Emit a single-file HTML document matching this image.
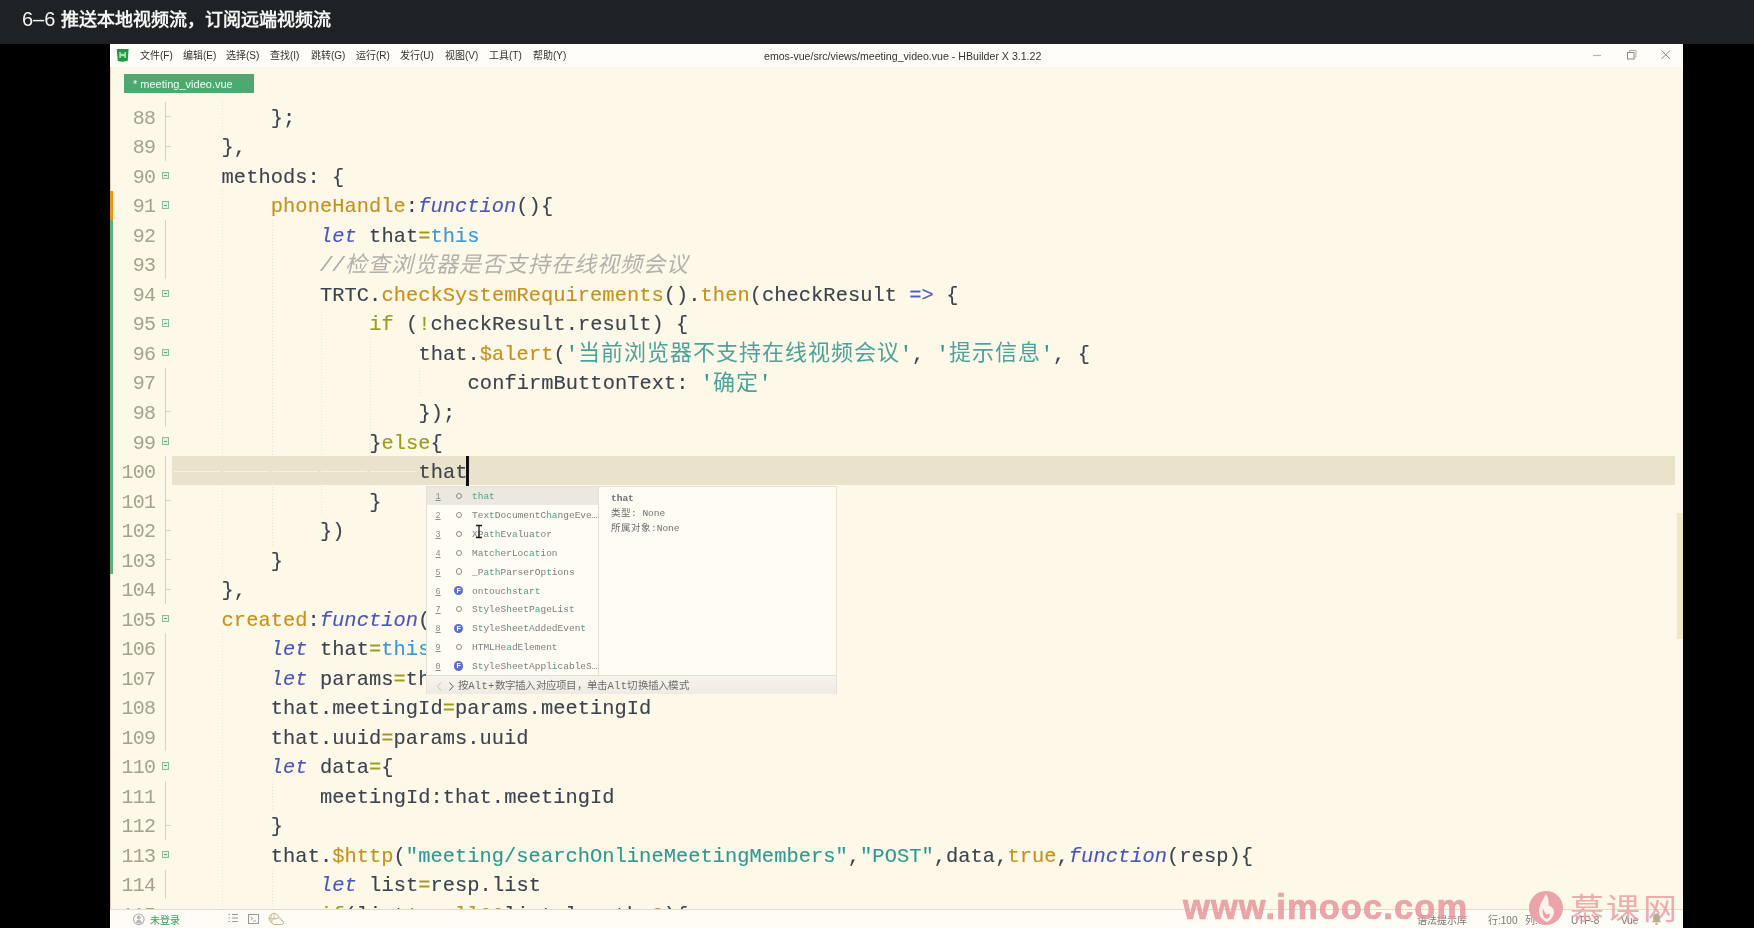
<!DOCTYPE html>
<html lang="zh-CN"><head><meta charset="utf-8">
<style>
*{margin:0;padding:0;box-sizing:border-box}
html,body{width:1754px;height:928px;overflow:hidden;background:#000;position:relative;font-family:"Liberation Sans",sans-serif;-webkit-font-smoothing:antialiased}
#hdr{position:absolute;left:0;top:0;width:1754px;height:44px;background:#1f2224;color:#f4f4f4;font-size:18px;line-height:38px;padding-left:22px;white-space:pre}
#hdr b{font-weight:600}
#win{position:absolute;left:110px;top:44px;width:1573px;height:884px;background:#fef8e8;overflow:hidden}
#menu{position:absolute;left:0;top:0;width:1573px;height:23px;background:#fffdf8}
.mi{position:absolute;top:5px;font-size:10px;color:#333;white-space:pre;line-height:14px}
#wtitle{position:absolute;top:4.5px;left:654px;font-size:10.6px;color:#333;white-space:pre;line-height:14px}
#tab{position:absolute;left:14px;top:30px;width:130px;height:19px;background:#4ea971;color:#f4fbf6;font-size:11px;line-height:21px;padding-left:9px;white-space:pre}
#code{position:absolute;left:-110px;top:-44px;width:1754px;height:953px;clip-path:inset(0 0 19px 0)}
.ln{position:absolute;height:29.55px;line-height:29.55px;font-family:"Liberation Mono",monospace;font-size:20.4px;letter-spacing:0.04px;white-space:pre;color:#3a4550;-webkit-text-stroke:0.12px currentColor}
.num{position:absolute;left:100px;width:55.2px;text-align:right;height:29.55px;line-height:29.55px;font-family:"Liberation Mono",monospace;font-size:20px;letter-spacing:-0.75px;color:#a89f8c}
.d{color:#3a4550}.g{color:#c8901c}.o{color:#9c9c1c}.bi{color:#4757bf;font-style:italic}.b{color:#4b5dc8}.t{color:#3a9ad9}.s{color:#2f9a91}.ci{color:#a9a8a4;font-style:italic}.p{color:#e05c78}
.cj{letter-spacing:0.98px;font-size:22px;-webkit-text-stroke:0;position:relative;top:0.5px}
.cjc{top:1px;color:#b2b0ab}
.s .cj{color:#4aa39d}
.fb{position:absolute;left:161.5px;width:7.5px;height:7.5px;border:1.1px solid #8cbb9c;background:#e3f3e4}
.fb::after{content:"";position:absolute;left:1px;right:1px;top:2.3px;height:1px;background:#6e9c80}
.gl{position:absolute;left:165px;width:1px;background:#d9d0bd}
.gt{position:absolute;left:165px;width:6px;height:1px;background:#d9d0bd}
.ig{position:absolute;width:1px;background-image:linear-gradient(#ebe4d3 50%,transparent 50%);background-size:1px 3px}
#hl{position:absolute;left:172px;top:455.6px;width:1503px;height:29.7px;background:#eae2cb}
#status{position:absolute;left:0;top:865px;width:1573px;height:19px;background:#fffcf6;border-top:1.3px solid #e4dbc9}

#logoH{position:absolute;left:6.5px;top:4.5px;width:11.5px;height:13.5px;background:#1aa34a;border-radius:1px 1px 5px 5px;color:#fff;font-weight:bold;font-size:10px;line-height:12px;text-align:center}
.wc{position:absolute;top:0;height:23px}
#edgeO{position:absolute;left:0;width:3px;background:#ea9317}
#edgeG{position:absolute;left:0;width:3px;background:#62ad7c}
#edgeL{position:absolute;left:0;width:1px;background:#d8cfb8}
#caret{position:absolute;left:466.3px;top:456.3px;width:2.3px;height:29.3px;background:#111}
.ws{position:absolute;top:471px;height:1px;background:#f6f1e3}
#sb{position:absolute;left:1676.5px;top:513px;width:6.5px;height:126px;background:#f3e6c6}
#pop{position:absolute;left:426px;top:486px;width:411px;height:208px;background:#fffcf4;border:1px solid #e6e1d6;font-family:"Liberation Mono",monospace}
#pop .sel{position:absolute;left:0;top:0;width:172px;height:18.2px;background:#ebe8e0}
#pop .div{position:absolute;left:171px;top:0;width:1px;height:189px;background:#e3dfd4}
#pop .row{position:absolute;left:0;width:172px;height:18.85px;line-height:18.85px;font-size:9.5px;white-space:pre;color:#7d7d7d}
#pop .row .n{position:absolute;left:8.5px;font-size:8.5px;text-decoration:underline;color:#8a8a8a}
#pop .row .ic{position:absolute;left:28.5px;top:4.7px;width:6.3px;height:6.3px;border:1.3px solid #8c8c8c;border-radius:50%}
#pop .row .icf{position:absolute;left:27px;top:3.4px;width:9.4px;height:9.4px;border-radius:50%;background:#5b6cd3;color:#fff;font-family:"Liberation Sans",sans-serif;font-weight:bold;font-size:7px;line-height:9.4px;text-align:center}
#pop .row .tx{position:absolute;left:45px}
#pop .m{color:#4aa588}
#pop .det{position:absolute;left:184px;font-size:9.5px;color:#6e6e6e;white-space:pre;line-height:14.9px;top:5px}
#pop .foot{position:absolute;left:0;top:188px;width:409px;height:19px;background:linear-gradient(#f6f4ee,#eeebe4);border-top:1px solid #e0dcd2;font-size:10.5px;letter-spacing:0.27px;color:#6c6c6c;white-space:pre;line-height:21px}
#wm{position:absolute;left:1183px;top:886.5px;font-family:"Liberation Sans",sans-serif;font-weight:bold;font-size:34.5px;letter-spacing:1.1px;color:rgba(232,150,158,0.85);-webkit-text-stroke:0.7px rgba(232,150,158,0.85);white-space:pre;line-height:40px}
#wm2{position:absolute;left:1570px;top:888.5px;font-size:34px;letter-spacing:2.3px;transform:scaleY(0.87);transform-origin:0 50%;color:rgba(232,150,158,0.78);white-space:pre;line-height:40px;font-weight:300}
#wmc{position:absolute;left:1528.5px;top:890.5px;width:34.5px;height:34.5px;border-radius:50%;background:#eaa3a8}
.st{position:absolute;top:910.5px;font-size:10px;line-height:19px;color:#777;white-space:pre}
</style></head><body>
<div id="root" style="position:absolute;left:0;top:0;width:1754px;height:928px;will-change:transform">
<div id="hdr"><span style="font-size:20px">6–6 </span><b>推送本地视频流，订阅远端视频流</b></div>
<div id="win">
 <div id="menu">
  <svg style="position:absolute;left:0;top:0" width="26" height="23" viewBox="0 0 26 23"><path d="M6.7 4.9H18.6L17.7 17.1L12.6 17.8L7.8 17.1Z" fill="#1c9a47"/><path d="M9.2 8h1.7v6H9.2zM14.4 8h1.6v6h-1.6zM10.9 9.8h3.5v2.4h-3.5z" fill="#a3e3ac"/></svg>
  <div class="mi" style="left:30px">文件(F)</div>
  <div class="mi" style="left:73px">编辑(E)</div>
  <div class="mi" style="left:116px">选择(S)</div>
  <div class="mi" style="left:160px">查找(I)</div>
  <div class="mi" style="left:201px">跳转(G)</div>
  <div class="mi" style="left:246px">运行(R)</div>
  <div class="mi" style="left:290px">发行(U)</div>
  <div class="mi" style="left:335px">视图(V)</div>
  <div class="mi" style="left:379px">工具(T)</div>
  <div class="mi" style="left:423px">帮助(Y)</div>
  <div id="wtitle">emos-vue/src/views/meeting_video.vue - HBuilder X 3.1.22</div>
  <svg style="position:absolute;left:1480px;top:0" width="93" height="23" viewBox="0 0 93 23">
   <line x1="3" y1="11.5" x2="11" y2="11.5" stroke="#b9b4ab" stroke-width="1.2"/>
   <rect x="37.5" y="8.5" width="6.5" height="6.5" fill="none" stroke="#8c8780" stroke-width="1"/>
   <path d="M39.5 8.5 V6.5 H46 V13 H44" fill="none" stroke="#b8aaa0" stroke-width="1"/>
   <path d="M71.5 6.5 L80 15 M80 6.5 L71.5 15" stroke="#8c8780" stroke-width="1"/>
  </svg>
 </div>
 <div id="tab">* meeting_video.vue</div>
 <div id="code">
 <div id="hl"></div>
<div class="ln" style="top:103.80px;left:270.80px"><span class="d">};</span></div>
<div class="num" style="top:103.80px">88</div>
<div class="ln" style="top:133.32px;left:221.60px"><span class="d">},</span></div>
<div class="num" style="top:133.32px">89</div>
<div class="ln" style="top:162.84px;left:221.60px"><span class="d">methods: {</span></div>
<div class="num" style="top:162.84px">90</div>
<div class="ln" style="top:192.36px;left:270.80px"><span class="g">phoneHandle</span><span class="d">:</span><span class="bi">function</span><span class="d">(){</span></div>
<div class="num" style="top:192.36px">91</div>
<div class="ln" style="top:221.88px;left:320.00px"><span class="bi">let</span><span class="d"> that</span><span class="o">=</span><span class="t">this</span></div>
<div class="num" style="top:221.88px">92</div>
<div class="ln" style="top:251.40px;left:320.00px"><span class="ci">//<span class="cj cjc">检查浏览器是否支持在线视频会议</span></span></div>
<div class="num" style="top:251.40px">93</div>
<div class="ln" style="top:280.92px;left:320.00px"><span class="d">TRTC.</span><span class="g">checkSystemRequirements</span><span class="d">().</span><span class="g">then</span><span class="d">(checkResult </span><span class="b">=&gt;</span><span class="d"> {</span></div>
<div class="num" style="top:280.92px">94</div>
<div class="ln" style="top:310.44px;left:369.20px"><span class="o">if</span><span class="d"> (</span><span class="o">!</span><span class="d">checkResult.result) {</span></div>
<div class="num" style="top:310.44px">95</div>
<div class="ln" style="top:339.96px;left:418.40px"><span class="d">that.</span><span class="g">$alert</span><span class="d">(</span><span class="s">&#x27;<span class="cj">当前浏览器不支持在线视频会议</span>&#x27;</span><span class="d">, </span><span class="s">&#x27;<span class="cj">提示信息</span>&#x27;</span><span class="d">, {</span></div>
<div class="num" style="top:339.96px">96</div>
<div class="ln" style="top:369.48px;left:467.60px"><span class="d">confirmButtonText: </span><span class="s">&#x27;<span class="cj">确定</span>&#x27;</span></div>
<div class="num" style="top:369.48px">97</div>
<div class="ln" style="top:399.00px;left:418.40px"><span class="d">});</span></div>
<div class="num" style="top:399.00px">98</div>
<div class="ln" style="top:428.52px;left:369.20px"><span class="d">}</span><span class="o">else</span><span class="d">{</span></div>
<div class="num" style="top:428.52px">99</div>
<div class="ln" style="top:458.04px;left:418.40px"><span class="d">that</span></div>
<div class="num" style="top:458.04px">100</div>
<div class="ln" style="top:487.56px;left:369.20px"><span class="d">}</span></div>
<div class="num" style="top:487.56px">101</div>
<div class="ln" style="top:517.08px;left:320.00px"><span class="d">})</span></div>
<div class="num" style="top:517.08px">102</div>
<div class="ln" style="top:546.60px;left:270.80px"><span class="d">}</span></div>
<div class="num" style="top:546.60px">103</div>
<div class="ln" style="top:576.12px;left:221.60px"><span class="d">},</span></div>
<div class="num" style="top:576.12px">104</div>
<div class="ln" style="top:605.64px;left:221.60px"><span class="g">created</span><span class="d">:</span><span class="bi">function</span><span class="d">(){</span></div>
<div class="num" style="top:605.64px">105</div>
<div class="ln" style="top:635.16px;left:270.80px"><span class="bi">let</span><span class="d"> that</span><span class="o">=</span><span class="t">this</span></div>
<div class="num" style="top:635.16px">106</div>
<div class="ln" style="top:664.68px;left:270.80px"><span class="bi">let</span><span class="d"> params</span><span class="o">=</span><span class="d">that.$route.params</span></div>
<div class="num" style="top:664.68px">107</div>
<div class="ln" style="top:694.20px;left:270.80px"><span class="d">that.meetingId</span><span class="o">=</span><span class="d">params.meetingId</span></div>
<div class="num" style="top:694.20px">108</div>
<div class="ln" style="top:723.72px;left:270.80px"><span class="d">that.uuid</span><span class="o">=</span><span class="d">params.uuid</span></div>
<div class="num" style="top:723.72px">109</div>
<div class="ln" style="top:753.24px;left:270.80px"><span class="bi">let</span><span class="d"> data</span><span class="o">=</span><span class="d">{</span></div>
<div class="num" style="top:753.24px">110</div>
<div class="ln" style="top:782.76px;left:320.00px"><span class="d">meetingId:that.meetingId</span></div>
<div class="num" style="top:782.76px">111</div>
<div class="ln" style="top:812.28px;left:270.80px"><span class="d">}</span></div>
<div class="num" style="top:812.28px">112</div>
<div class="ln" style="top:841.80px;left:270.80px"><span class="d">that.</span><span class="g">$http</span><span class="d">(</span><span class="s">&quot;meeting/searchOnlineMeetingMembers&quot;</span><span class="d">,</span><span class="s">&quot;POST&quot;</span><span class="d">,data,</span><span class="g">true</span><span class="d">,</span><span class="bi">function</span><span class="d">(resp){</span></div>
<div class="num" style="top:841.80px">113</div>
<div class="ln" style="top:871.32px;left:320.00px"><span class="bi">let</span><span class="d"> list</span><span class="o">=</span><span class="d">resp.list</span></div>
<div class="num" style="top:871.32px">114</div>
<div class="ln" style="top:900.84px;left:320.00px"><span class="o">if</span><span class="d">(list</span><span class="o">!=</span><span class="g">null</span><span class="o">&amp;&amp;</span><span class="d">list.length</span><span class="o">&gt;</span><span class="p">0</span><span class="d">){</span></div>
<div class="num" style="top:900.84px">115</div>
<div class="fb" style="top:171.80px"></div>
<div class="fb" style="top:201.32px"></div>
<div class="fb" style="top:289.88px"></div>
<div class="fb" style="top:319.40px"></div>
<div class="fb" style="top:348.92px"></div>
<div class="fb" style="top:437.48px"></div>
<div class="fb" style="top:614.60px"></div>
<div class="fb" style="top:762.20px"></div>
<div class="fb" style="top:850.76px"></div>
<div class="gl" style="top:102.00px;height:59.04px"></div>
<div class="gt" style="top:116.26px"></div>
<div class="gt" style="top:145.78px"></div>
<div class="gl" style="top:220.08px;height:59.04px"></div>
<div class="gl" style="top:367.68px;height:59.04px"></div>
<div class="gt" style="top:411.46px"></div>
<div class="gl" style="top:456.24px;height:147.60px"></div>
<div class="gt" style="top:500.02px"></div>
<div class="gt" style="top:529.54px"></div>
<div class="gt" style="top:559.06px"></div>
<div class="gt" style="top:588.58px"></div>
<div class="gl" style="top:633.36px;height:118.08px"></div>
<div class="gl" style="top:780.96px;height:59.04px"></div>
<div class="gt" style="top:824.74px"></div>
<div class="gl" style="top:869.52px;height:29.52px"></div>
<div class="ig" style="left:222.40px;top:102.00px;height:29.52px"></div>
<div class="ig" style="left:222.40px;top:190.56px;height:383.76px"></div>
<div class="ig" style="left:271.60px;top:220.08px;height:324.72px"></div>
<div class="ig" style="left:320.80px;top:308.64px;height:206.64px"></div>
<div class="ig" style="left:370.00px;top:338.16px;height:147.60px"></div>
<div class="ig" style="left:419.20px;top:367.68px;height:29.52px"></div>
<div class="ig" style="left:222.40px;top:633.36px;height:275.64px"></div>
<div class="ig" style="left:271.60px;top:780.96px;height:29.52px"></div>
<div class="ig" style="left:271.60px;top:869.52px;height:39.48px"></div>
<div id="edgeL" style="left:110px;top:67px;height:123.56px"></div>
<div id="edgeO" style="left:110px;top:190.56px;height:29.52px"></div>
<div id="edgeG" style="left:110px;top:220.08px;height:354.24px"></div>
<div id="edgeL" style="left:110px;top:574.32px;height:334.68px"></div>
<div id="caret"></div>
<div class="ws" style="left:174.0px;width:46.0px"></div>
<div class="ws" style="left:223.0px;width:46.0px"></div>
<div class="ws" style="left:272.1px;width:46.0px"></div>
<div class="ws" style="left:321.1px;width:46.0px"></div>
<div class="ws" style="left:370.2px;width:46.0px"></div>
<div id="sb"></div>
<div id="pop"><div class="sel"></div><div class="div"></div>
<div class="row" style="top:1.30px"><span class="n">1</span><span class="ic"></span><span class="tx"><span class="m">that</span></span></div>
<div class="row" style="top:20.15px"><span class="n">2</span><span class="ic"></span><span class="tx">Tex<span class="m">t</span>DocumentC<span class="m">ha</span>ngeEve…</span></div>
<div class="row" style="top:39.00px"><span class="n">3</span><span class="ic"></span><span class="tx">XPa<span class="m">th</span>Ev<span class="m">a</span>lua<span class="m">t</span>or</span></div>
<div class="row" style="top:57.85px"><span class="n">4</span><span class="ic"></span><span class="tx">Ma<span class="m">t</span>c<span class="m">h</span>erLoc<span class="m">at</span>ion</span></div>
<div class="row" style="top:76.70px"><span class="n">5</span><span class="ic"></span><span class="tx">_P<span class="m">ath</span>ParserOp<span class="m">t</span>ions</span></div>
<div class="row" style="top:95.55px"><span class="n">6</span><span class="icf">F</span><span class="tx">on<span class="m">t</span>ouc<span class="m">h</span>st<span class="m">a</span>r<span class="m">t</span></span></div>
<div class="row" style="top:114.40px"><span class="n">7</span><span class="ic"></span><span class="tx">S<span class="m">t</span>yleS<span class="m">h</span>eetP<span class="m">a</span>geLis<span class="m">t</span></span></div>
<div class="row" style="top:133.25px"><span class="n">8</span><span class="icf">F</span><span class="tx">S<span class="m">t</span>yleS<span class="m">h</span>eet<span class="m">A</span>ddedEven<span class="m">t</span></span></div>
<div class="row" style="top:152.10px"><span class="n">9</span><span class="ic"></span><span class="tx">HTMLHe<span class="m">a</span>dElemen<span class="m">t</span></span></div>
<div class="row" style="top:170.95px"><span class="n">0</span><span class="icf">F</span><span class="tx">S<span class="m">t</span>yleS<span class="m">h</span>eetAppl<span class="m">i</span>cableS…</span></div>
<div class="det"><b>that</b>
类型: None
所属对象:None</div>
<div class="foot"><svg style="position:absolute;left:9px;top:5px" width="22" height="11" viewBox="0 0 22 11"><path d="M5 1.5L1.5 5.5 5 9.5" fill="none" stroke="#c4c0b8" stroke-width="1"/><path d="M13.5 1.5L17 5.5 13.5 9.5" fill="none" stroke="#555" stroke-width="1"/></svg><span style="position:absolute;left:31px">按Alt+数字插入对应项目，单击Alt切换插入模式</span></div>
</div>
<svg style="position:absolute;left:475px;top:524px;z-index:5" width="8" height="15" viewBox="0 0 8 15"><path d="M1 1.5h6M4 1.5v12M1 13.5h6" fill="none" stroke="#1a1a1a" stroke-width="1.3"/></svg>
 </div>
 <div id="status"></div>
</div>
<div class="st" style="left:133px"><svg width="12" height="19" viewBox="0 0 12 19" style="position:relative;top:-2px"><circle cx="5.8" cy="10.3" r="5.3" fill="none" stroke="#b0b0b0" stroke-width="1.1"/><circle cx="5.8" cy="8.4" r="2" fill="#b8b8b8"/><path d="M2.8 14.2 Q3.2 10.8 5.8 10.8 Q8.4 10.8 8.8 14.2Z" fill="#b8b8b8"/></svg></div>
<div class="st" style="left:149.5px;color:#3a9c5c">未登录</div>
<svg style="position:absolute;left:226px;top:912px" width="60" height="14" viewBox="0 0 60 14">
 <path d="M2.5 2.5h1.5M6 2.5h6M2.5 6h1.5M6 6h6M2.5 9.5h1.5M6 9.5h6" stroke="#999" stroke-width="1"/>
 <rect x="22.5" y="2.5" width="10" height="9" fill="none" stroke="#999" stroke-width="1"/><path d="M24.5 5l2 1.5-2 1.5M27 9h3" stroke="#999" stroke-width="0.9" fill="none"/>
 <circle cx="48" cy="6.5" r="5" fill="none" stroke="#c9b48a" stroke-width="1"/><path d="M48 1.5v10M43 6.5h10M45.5 2.5q-1.5 4 0 8" fill="none" stroke="#c9b48a" stroke-width="0.8"/><path d="M47.5 12.5h8a2 2 0 0 0 0-4a3 3 0 0 0-5.5-1.5a2.5 2.5 0 0 0-2.5 5.5z" fill="#fffcf6" stroke="#c9b48a" stroke-width="1"/>
</svg>
<div class="st" style="left:1417px">语法提示库</div>
<div class="st" style="left:1488px">行:100</div>
<div class="st" style="left:1525px">列:5</div>
<div class="st" style="left:1571px">UTF-8</div>
<div class="st" style="left:1621px">Vue</div>
<svg style="position:absolute;left:1651px;top:912px" width="11" height="14" viewBox="0 0 11 14"><path d="M5.5 1.5c-2.3 0-3.4 1.8-3.4 4v3l-1.3 1.8h9.4L8.9 8.5v-3c0-2.2-1.1-4-3.4-4z" fill="#b8ae90"/><circle cx="5.5" cy="11.8" r="1.2" fill="#b8ae90"/></svg>
<div id="wm">www.imooc.com</div>
<div id="wmc"><svg width="34.5" height="34.5" viewBox="0 0 34.3 34.3"><path d="M16.7 3.2C18.6 5.2 19.9 8.5 19.7 14.4C22.2 15.2 24.8 17.6 24.8 20.6C24.8 25.2 21.6 29 17.8 31C13.2 29 10 24.6 10 20.4C10 15.2 12.6 10.8 16.7 3.2Z" fill="#fdf3ec"/><path d="M13.9 17.2C13.2 21 13.6 26.5 17.2 27.6C19.6 28 21 25.5 20.6 22.4C19.6 23.4 17.6 23.6 16.6 22.4C15.4 21 14.6 19.4 13.9 17.2Z" fill="#eaa3a8"/></svg></div>
<div id="wm2">慕课网</div>
</div>

</body></html>
